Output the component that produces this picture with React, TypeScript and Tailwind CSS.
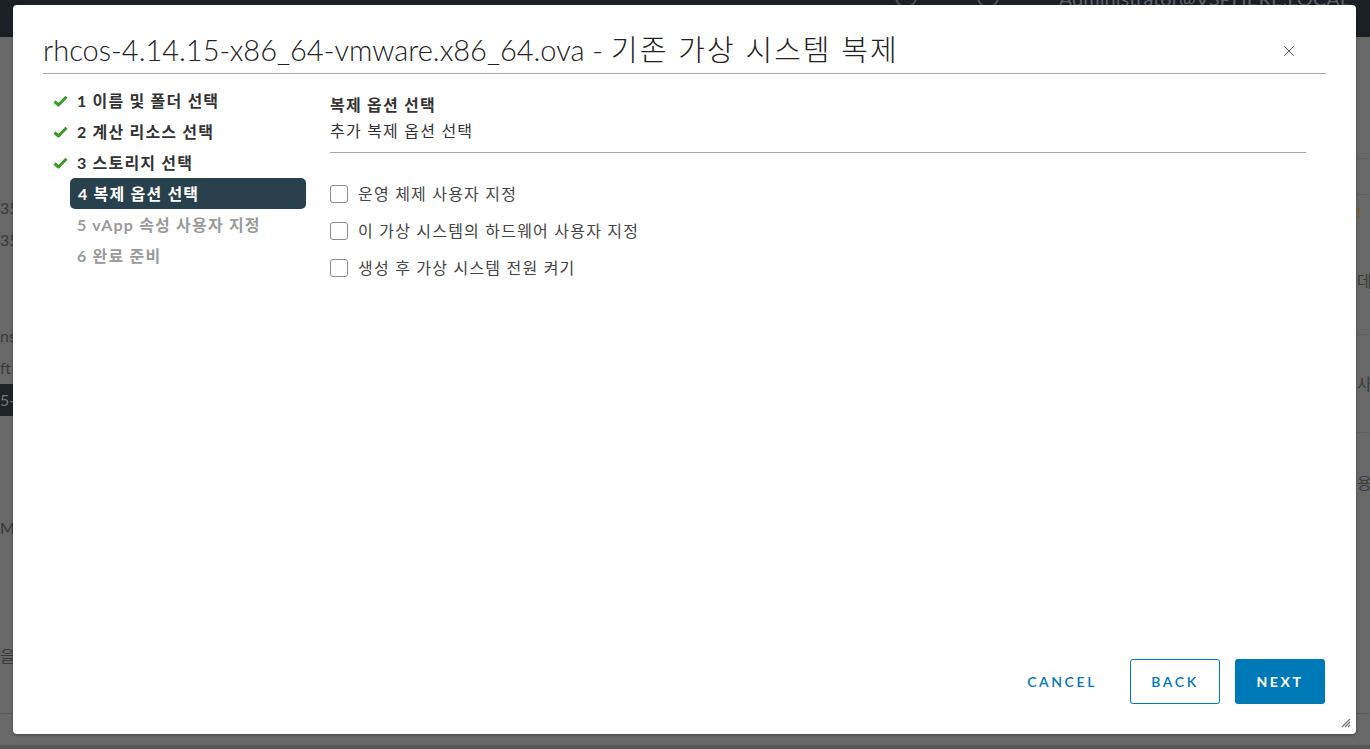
import { X } from 'lucide-react';

const FONT = "font-['Lato','Noto_Sans_CJK_KR',sans-serif]";

const steps = [
  { n: 1, label: '이름 및 폴더 선택', state: 'done' },
  { n: 2, label: '계산 리소스 선택', state: 'done' },
  { n: 3, label: '스토리지 선택', state: 'done' },
  { n: 4, label: '복제 옵션 선택', state: 'active' },
  { n: 5, label: 'vApp 속성 사용자 지정', state: 'todo' },
  { n: 6, label: '완료 준비', state: 'todo' },
];

const options = ['운영 체제 사용자 지정', '이 가상 시스템의 하드웨어 사용자 지정', '생성 후 가상 시스템 전원 켜기'];

// faint rows of the page behind the overlay
const leftRows = ['35', '35', '', '', 'ns', 'ft', '5-', '', '', '', 'M', '', '', '', '을'];
const rightRows = [
  { h: 'h-[46px]', t: '', line: true },
  { h: 'h-[36px]', t: '', line: true },
  { h: 'h-[33px]', t: '!' },
  { h: 'h-[107px]', t: '데', line: true },
  { h: 'h-[98px]', t: '사', line: true },
  { h: 'h-[100px]', t: '용' },
];

function Check() {
  return (
    <svg width="15" height="12" viewBox="0 0 15 12" className="shrink-0">
      <path d="M1.5 6.5 L5.5 10 L13.5 1.8" fill="none" stroke="#3c9a2b" strokeWidth="3" strokeLinejoin="round" />
    </svg>
  );
}

function StepItem({ n, label, state }: { n: number; label: string; state: string }) {
  if (state === 'active') {
    return (
      <div className="h-[31px] flex items-center">
        <div className="ml-[57px] w-[236px] h-[31px] rounded-[5px] bg-[#29404d] flex items-center pl-[8px] text-white text-[16px] font-bold tracking-[1.2px]">
          {n} {label}
        </div>
      </div>
    );
  }
  return (
    <div className="h-[31px] flex items-center pl-[40px]">
      <div className="w-[24px]">{state === 'done' && <Check />}</div>
      <span className={`text-[16px] font-bold tracking-[1.2px] ${state === 'done' ? 'text-[#333]' : 'text-[#9a9a9a]'}`}>
        {n} {label}
      </span>
    </div>
  );
}

function Backdrop() {
  return (
    <div className="w-full h-full flex flex-col bg-[#686868] text-[#3a3a3a] text-[16px]">
      <div className="h-[37px] shrink-0 bg-[#1b2026] flex justify-end items-start gap-[60px] pr-[20px] overflow-hidden">
        <div className="w-[22px] h-[22px] -mt-[14px] rounded-full border-2 border-[#4a5056]" />
        <div className="w-[22px] h-[22px] -mt-[14px] rounded-full border-2 border-[#4a5056]" />
        <div className="text-[#5d6268] text-[20px] leading-[20px] -mt-[12px]">Administrator@VSPHERE.LOCAL</div>
      </div>
      <div className="flex-1 flex">
        <div className="w-[13px] pt-[155px] flex flex-col">
          {leftRows.map((t, i) => (
            <div
              key={i}
              className={`h-[32px] leading-[32px] whitespace-nowrap ${t === '5-' ? 'bg-[#1d2329] text-[#777]' : ''}`}
            >
              {t}
            </div>
          ))}
        </div>
        <div className="flex-1" />
        <div className="w-[14px] pt-[76px] flex flex-col overflow-hidden">
          {rightRows.map((r, i) => (
            <div
              key={i}
              className={`${r.h} whitespace-nowrap flex items-center pl-[1px] ${r.line ? 'border-b border-[#5e5e5e]' : ''} ${r.t === '!' ? 'text-[#8a5a10]' : ''}`}
            >
              {r.t}
            </div>
          ))}
        </div>
      </div>
      <div className="h-[36px] shrink-0 border-t border-[#5a5a5a] border-b-4 border-b-[#555]" />
    </div>
  );
}

export default function App() {
  return (
    <div className={`${FONT} relative w-[1370px] h-[749px] overflow-hidden`}>
      <Backdrop />

      {/* dialog */}
      <div className="absolute left-[13px] top-[5px] w-[1343px] h-[729px] bg-white rounded-[4px] shadow-[0_1px_3px_rgba(0,0,0,0.35)] flex flex-col">
        <div className="mx-[30px] h-[69px] border-b border-[#a6a6a6] flex items-end justify-between pb-[5px]">
          <h1 className="text-[29px] font-light text-[#222] leading-[36px]">
            rhcos-4.14.15-x86_64-vmware.x86_64.ova - <span className="tracking-[2px]">기존 가상 시스템 복제</span>
          </h1>
          <X className="mr-[28px] mb-[8px] text-[#666]" size={18} strokeWidth={1.3} />
        </div>

        <div className="flex flex-1 pt-[11px]">
          <div className="w-[317px] flex flex-col">
            {steps.map(s => (
              <StepItem key={s.n} {...s} />
            ))}
          </div>
          <div className="flex-1 pr-[50px]">
            <div className="border-b border-[#a6a6a6] pb-[8px]">
              <div className="text-[16px] font-semibold tracking-[1.2px] text-[#333] leading-[26px] pt-[7px]">복제 옵션 선택</div>
              <div className="text-[16px] tracking-[1.2px] text-[#333] leading-[26px]">추가 복제 옵션 선택</div>
            </div>
            <div className="pt-[30px] flex flex-col gap-[16px]">
              {options.map(o => (
                <label key={o} className="flex items-center gap-[10px] h-[21px]">
                  <span className="w-[18px] h-[18px] rounded-[3px] border border-[#8c8c8c] bg-white" />
                  <span className="text-[16px] tracking-[1.2px] text-[#444]">{o}</span>
                </label>
              ))}
            </div>
          </div>
        </div>

        <div className="flex items-center justify-end pr-[31px] pb-[30px]">
          <button className="h-[45px] text-[14px] font-semibold tracking-[2.6px] text-[#0079b8]">CANCEL</button>
          <button className="w-[90px] h-[45px] ml-[33px] rounded-[3px] border border-[#0079b8] text-[14px] font-semibold tracking-[2.6px] text-[#0079b8]">
            BACK
          </button>
          <button className="w-[90px] h-[45px] ml-[15px] rounded-[3px] bg-[#0079b8] text-[14px] font-bold tracking-[2.6px] text-white">NEXT</button>
        </div>

        <svg className="absolute right-[5px] bottom-[6px]" width="10" height="10" viewBox="0 0 10 10">
          <path d="M9 1 L1 9 M9 4 L4 9 M9 7 L7 9" stroke="#777" strokeWidth="1.2" />
        </svg>
      </div>
    </div>
  );
}
